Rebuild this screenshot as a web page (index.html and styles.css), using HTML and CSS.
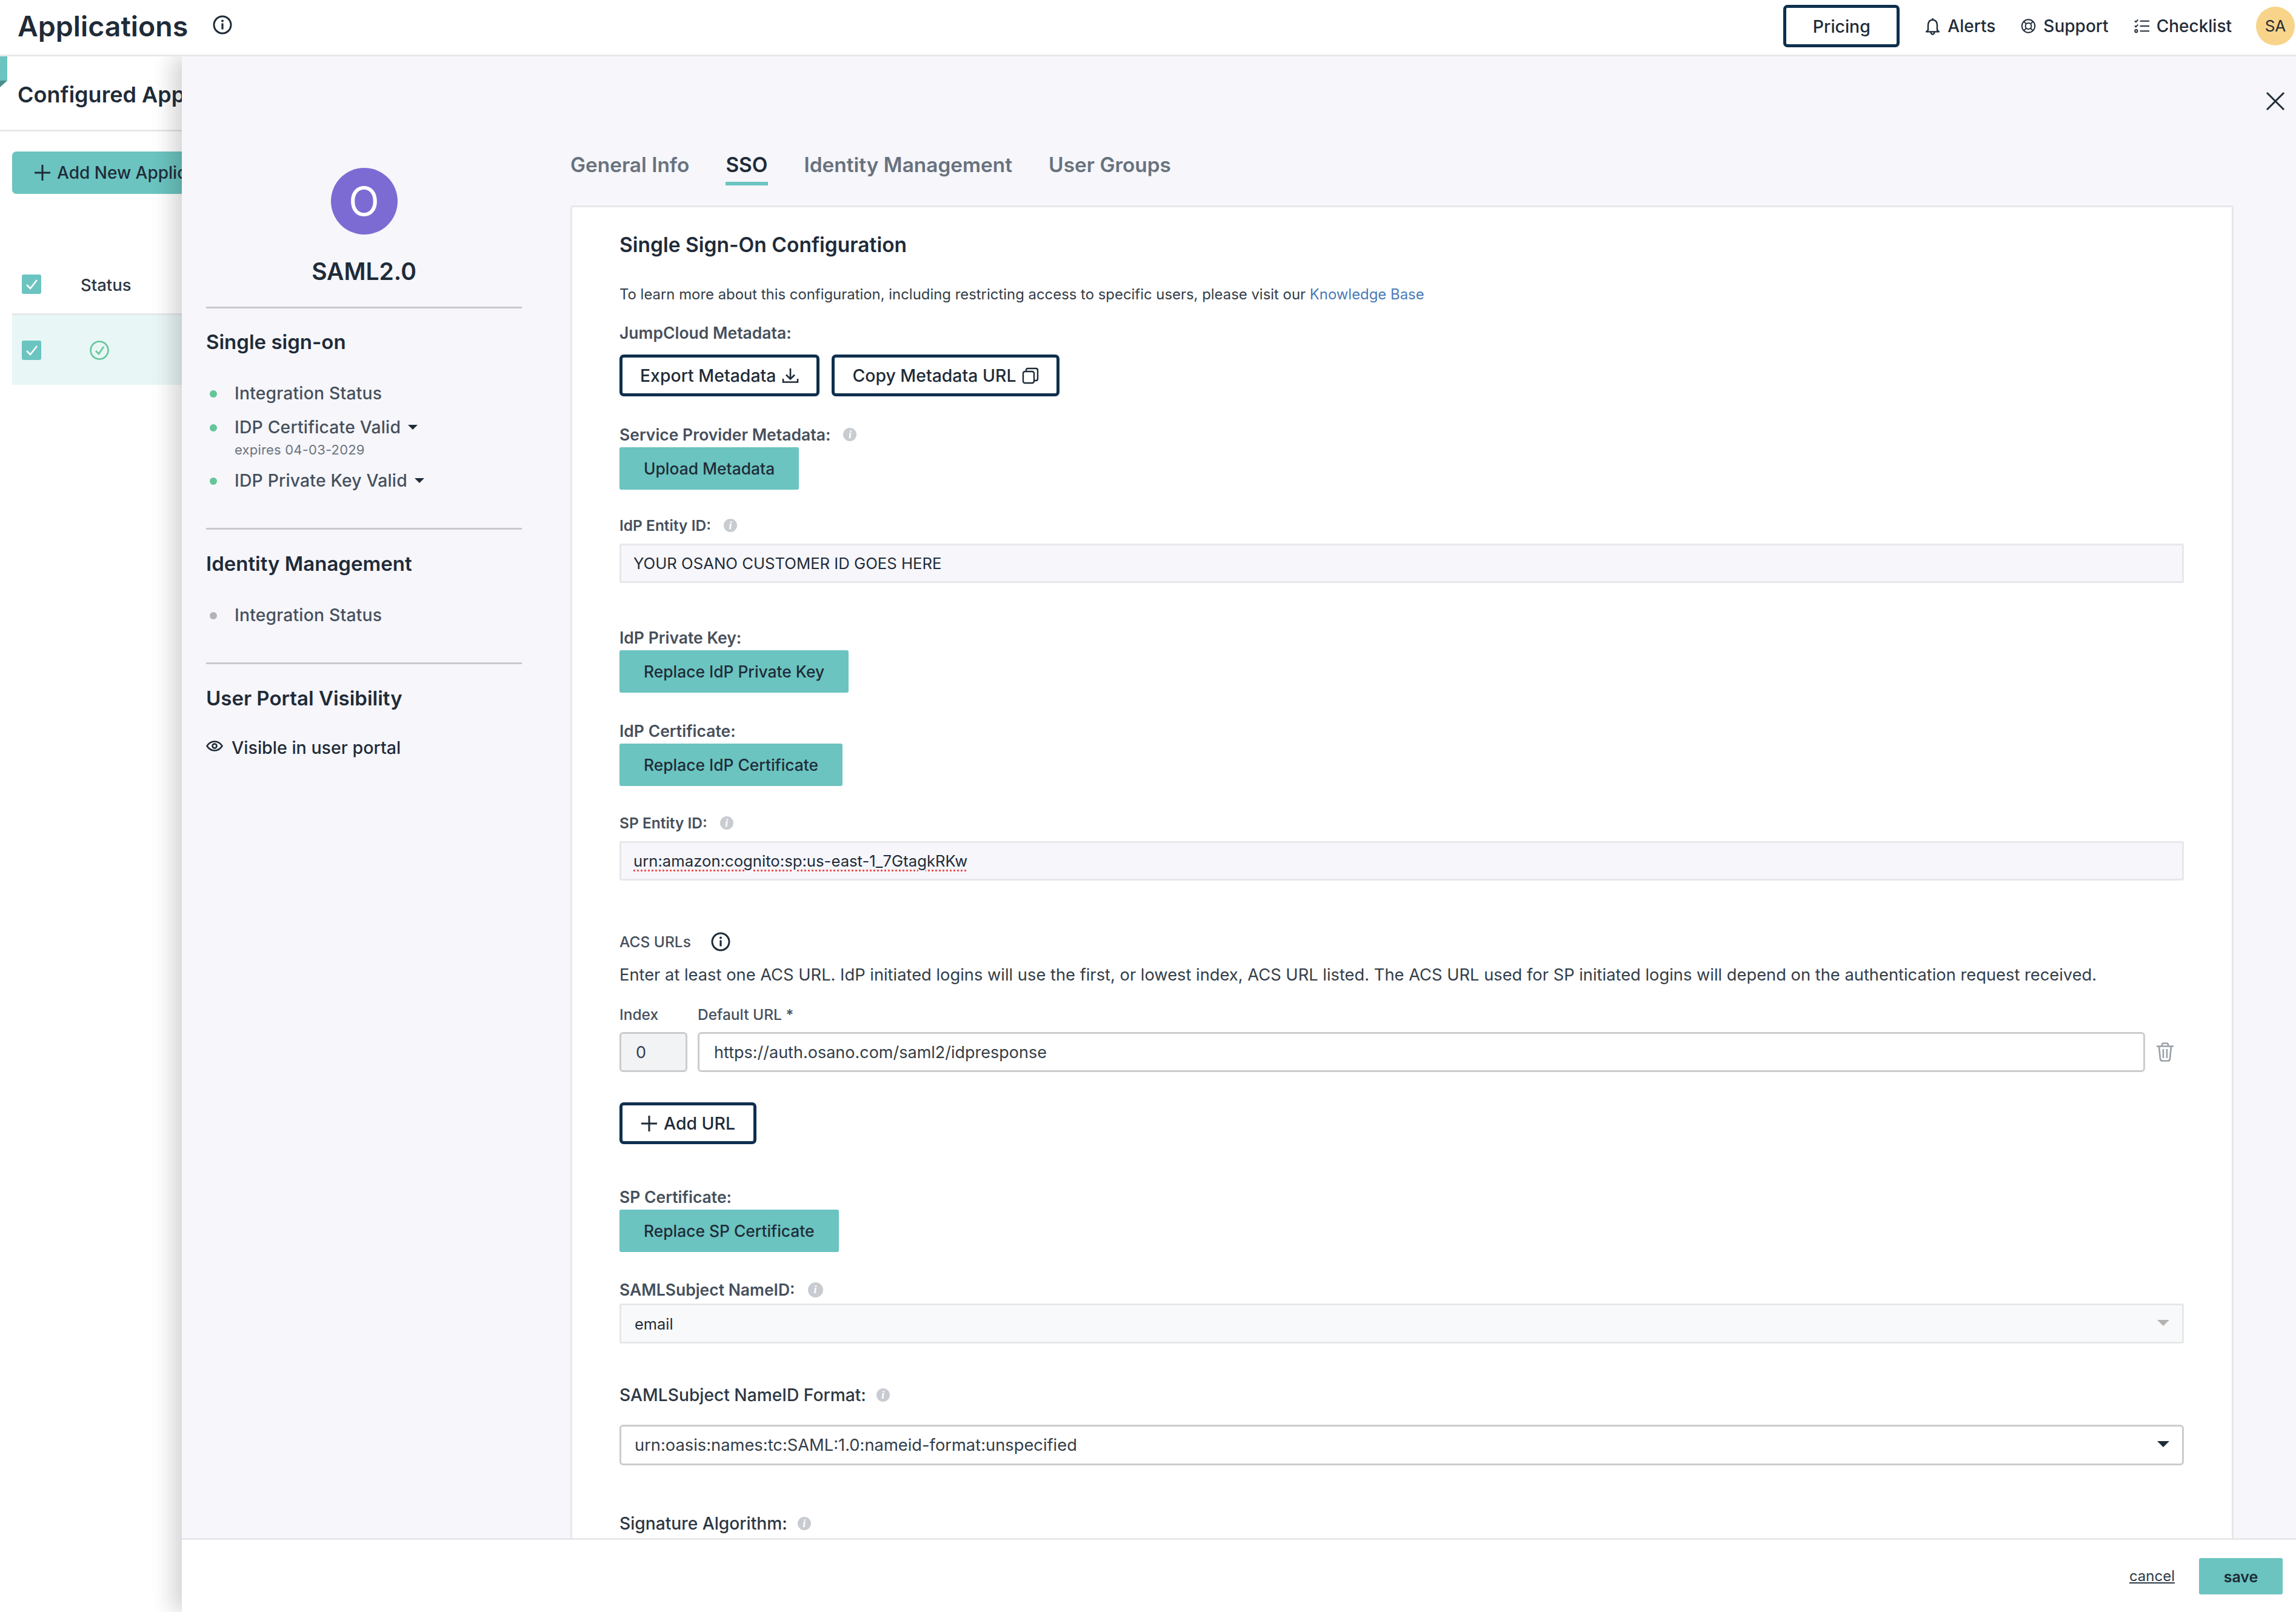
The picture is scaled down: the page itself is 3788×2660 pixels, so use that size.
FILE: index.html
```html
<!DOCTYPE html>
<html lang="en">
<head>
    <meta charset="UTF-8">
    <title>Applications</title>
    <link rel="stylesheet" href="styles.css">
</head>
<body>
    <header class="topbar">
        <h1 class="page-title">Applications</h1>
        <svg class="title-info" viewBox="0 0 32 32"><circle cx="16" cy="16" r="14" fill="none" stroke="#1f2b38" stroke-width="3"/><circle cx="16" cy="9.5" r="2" fill="#1f2b38"/><rect x="14.4" y="13.5" width="3.2" height="10" fill="#1f2b38"/></svg>
        <div class="topbar-right">
            <a class="btn-outline pricing">Pricing</a>
            <a class="top-link">
                <svg class="top-icon" viewBox="0 0 26 32"><path d="M13 2v3M5 23V14c0-5 3-9 8-9s8 4 8 9v9l3 3H2z M10 27c0 2 1.500 3.500 3 3.500s3-1.500 3-3.500" fill="none" stroke="#1f2b38" stroke-width="2.600" stroke-linejoin="round"/></svg>
                Alerts
            </a>
            <a class="top-link">
                <svg class="top-icon" viewBox="0 0 28 28"><g fill="none" stroke="#1f2b38" stroke-width="2.200"><circle cx="14" cy="14" r="12"/><circle cx="14" cy="14" r="5.500"/><path d="M5.500 5.500l4.600 4.600M22.500 5.500l-4.600 4.600M5.500 22.500l4.600-4.600M22.500 22.500l-4.600-4.600"/></g></svg>
                Support
            </a>
            <a class="top-link">
                <svg class="top-icon" viewBox="0 0 26 26"><g fill="none" stroke="#1f2b38" stroke-width="2"><path d="M10 4.500h16M10 13h16M10 21.500h16"/><path d="M1 4l2 2 3.500-4M1 12.500l2 2 3.500-4"/><circle cx="3.500" cy="21.500" r="2.200"/></g></svg>
                Checklist
            </a>
            <div class="avatar">SA</div>
        </div>
    </header>

    <div class="behind">
        <div class="ribbon"></div>
        <h2 class="behind-title">Configured Applications</h2>
        <div class="behind-action">
            <a class="btn-add">
                <svg class="plus-icon" viewBox="0 0 28 28"><path d="M14 1v26M1 14h26" stroke="#1f2b38" stroke-width="3" fill="none"/></svg>
                Add New Application
            </a>
        </div>
        <div class="table-head">
            <span class="check-box"><svg viewBox="0 0 32 32"><path d="M8 17l6 6 11-14" fill="none" stroke="#fff" stroke-width="2.500"/></svg></span>
            <span class="status-head">Status</span>
        </div>
        <div class="table-row">
            <span class="check-box"><svg viewBox="0 0 32 32"><path d="M8 17l6 6 11-14" fill="none" stroke="#fff" stroke-width="2.500"/></svg></span>
            <svg class="row-status" viewBox="0 0 32 32"><circle cx="16" cy="16" r="14.500" fill="none" stroke="#63c598" stroke-width="2.500"/><path d="M10 17l5 5 8-12" fill="none" stroke="#63c598" stroke-width="2.500"/></svg>
        </div>
    </div>

    <div class="drawer">
        <svg class="drawer-close" viewBox="0 0 32 32"><path d="M2 2l28 28M30 2L2 30" stroke="#1f2b38" stroke-width="3" fill="none"/></svg>
        <div class="drawer-body">
            <aside class="side">
                <div class="app-logo">O</div>
                <div class="app-name">SAML2.0</div>
                <hr class="side-rule first">
                <h3 class="side-heading first">Single sign-on</h3>
                <ul class="status-list">
                    <li class="status-item"><span class="dot"></span>Integration Status</li>
                    <li class="status-item"><span class="dot"></span>IDP Certificate Valid<span class="caret"></span></li>
                    <li class="status-note">expires 04-03-2029</li>
                    <li class="status-item next"><span class="dot"></span>IDP Private Key Valid<span class="caret"></span></li>
                </ul>
                <hr class="side-rule">
                <h3 class="side-heading">Identity Management</h3>
                <ul class="status-list">
                    <li class="status-item"><span class="dot off"></span>Integration Status</li>
                </ul>
                <hr class="side-rule">
                <h3 class="side-heading">User Portal Visibility</h3>
                <div class="visible-row">
                    <svg class="eye-icon" viewBox="0 0 28 18"><path d="M1.500 9C5 3.500 9 1.500 14 1.500S23 3.500 26.500 9C23 14.500 19 16.500 14 16.500S5 14.500 1.500 9z" fill="none" stroke="#1f2b38" stroke-width="2.600"/><circle cx="14" cy="9" r="3.500" fill="none" stroke="#1f2b38" stroke-width="2.600"/></svg>
                    Visible in user portal
                </div>
            </aside>

            <main class="main">
                <nav class="tabs">
                    <a class="tab">General Info</a>
                    <a class="tab active">SSO</a>
                    <a class="tab">Identity Management</a>
                    <a class="tab">User Groups</a>
                </nav>

                <section class="card">
                    <h2 class="card-title">Single Sign-On Configuration</h2>
                    <p class="intro">To learn more about this configuration, including restricting access to specific users, please visit our <a class="link">Knowledge Base</a></p>

                    <div class="label l-jump">JumpCloud Metadata:</div>
                    <div class="btn-row">
                        <a class="btn-outline">Export Metadata
                            <svg class="btn-icon" viewBox="0 0 28 28"><path d="M14 2v17M7 12.500l7 7 7-7M2 19v5.500h24V19" fill="none" stroke="#1f2b38" stroke-width="2.600"/></svg>
                        </a>
                        <a class="btn-outline">Copy Metadata URL
                            <svg class="btn-icon" viewBox="0 0 28 28"><rect x="2" y="7" width="18" height="19" rx="3" fill="none" stroke="#1f2b38" stroke-width="2.400"/><path d="M7 7V5c0-2 1-3 3-3h13c2 0 3 1 3 3v14c0 2-1 3-3 3h-3" fill="none" stroke="#1f2b38" stroke-width="2.400"/></svg>
                        </a>
                    </div>

                    <div class="label l-sp-meta">Service Provider Metadata:<span class="hint">i</span></div>
                    <a class="btn-teal b-upload">Upload Metadata</a>

                    <div class="label small strong l-idp-entity">IdP Entity ID:<span class="hint">i</span></div>
                    <div class="input readonly i-idp-entity">YOUR OSANO CUSTOMER ID GOES HERE</div>

                    <div class="label l-key">IdP Private Key:</div>
                    <a class="btn-teal b-key">Replace IdP Private Key</a>

                    <div class="label l-cert">IdP Certificate:</div>
                    <a class="btn-teal b-cert">Replace IdP Certificate</a>

                    <div class="label small strong l-sp-entity">SP Entity ID:<span class="hint">i</span></div>
                    <div class="input readonly i-sp-entity"><span class="spell">urn:amazon:cognito:sp:us-east-1_7GtagkRKw</span></div>

                    <div class="label small l-acs">ACS URLs
                        <svg class="acs-info" viewBox="0 0 32 32"><circle cx="16" cy="16" r="14" fill="none" stroke="#1f2b38" stroke-width="3"/><circle cx="16" cy="9.500" r="2" fill="#1f2b38"/><rect x="14.400" y="13.500" width="3.200" height="10" fill="#1f2b38"/></svg>
                    </div>
                    <p class="acs-help">Enter at least one ACS URL. IdP initiated logins will use the first, or lowest index, ACS URL listed. The ACS URL used for SP initiated logins will depend on the authentication request received.</p>

                    <div class="url-grid">
                        <div class="label small">Index</div>
                        <div class="label small">Default URL *</div>
                        <div class="trash-cell"></div>
                        <div class="input url index">0</div>
                        <div class="input url">https://auth.osano.com/saml2/idpresponse</div>
                        <svg class="trash-icon" viewBox="0 0 30 32"><g fill="none" stroke="#9aa1a8" stroke-width="2.600"><path d="M1 6.500h28M10 6V4c0-1.500 1-2.500 2.500-2.500h5C19 1.500 20 2.500 20 4v2M5 7l2 20c.2 2 1.500 3.500 3.500 3.500h9c2 0 3.300-1.500 3.500-3.500l2-20M12 11v15M18 11v15"/></g></svg>
                    </div>

                    <a class="btn-outline b-add">
                        <svg class="plus-icon" viewBox="0 0 28 28"><path d="M14 1v26M1 14h26" stroke="#1f2b38" stroke-width="3" fill="none"/></svg>
                        Add URL
                    </a>

                    <div class="label l-sp-cert">SP Certificate:</div>
                    <a class="btn-teal b-sp-cert">Replace SP Certificate</a>

                    <div class="label l-name-id">SAMLSubject NameID:<span class="hint big">i</span></div>
                    <div class="input select disabled i-name-id">email<span class="select-caret grey"></span></div>

                    <div class="label dark l-format">SAMLSubject NameID Format:<span class="hint">i</span></div>
                    <div class="input select i-format">urn:oasis:names:tc:SAML:1.0:nameid-format:unspecified<span class="select-caret"></span></div>

                    <div class="label dark l-sig">Signature Algorithm:<span class="hint">i</span></div>
                </section>
            </main>
        </div>
        <footer class="drawer-foot">
            <a class="cancel">cancel</a>
            <a class="save">save</a>
        </footer>
    </div>
</body>
</html>
```

FILE: styles.css
```css
:root {
    --ink: #1f2b38;
    --navy: #0f2f4d;
    --teal: #6bc4c0;
    --panel: #f6f6fb;
    --line: #e6e8ea;
    --rule: #c9c9cf;
    --label: #46505c;
}

* {
    box-sizing: border-box;
}

html, body {
    margin: 0;
    height: 2660px;
    overflow: hidden;
}

body {
    position: relative;
    background: #ffffff;
    color: var(--ink);
    font-family: Inter, 'Noto Sans', 'Liberation Sans', sans-serif;
}

h1, h2, h3, p, ul {
    margin: 0;
    padding: 0;
}

/* top bar */
.topbar {
    position: relative;
    z-index: 2;
    display: flex;
    align-items: center;
    height: 93px;
    padding: 0 2px 4px 29px;
    border-bottom: 3px solid var(--line);
    background: #ffffff;
}

.page-title {
    font-size: 46.5px;
    font-weight: 600;
    line-height: 60px;
}

.title-info {
    width: 32px;
    height: 32px;
    margin: 0 0 5px 41px;
}

.topbar-right {
    display: flex;
    align-items: center;
    margin-left: auto;
}

.top-link {
    display: flex;
    align-items: center;
    gap: 12px;
    margin-left: 42px;
    font-size: 28px;
    font-weight: 500;
}

.top-icon {
    width: 25px;
    height: 30px;
}

.avatar {
    width: 64px;
    height: 64px;
    margin-left: 40px;
    border-radius: 50%;
    background: #f8d48a;
    font-size: 26px;
    line-height: 64px;
    text-align: center;
}

/* buttons */
.btn-outline {
    display: inline-flex;
    align-items: center;
    justify-content: center;
    gap: 10px;
    height: 69px;
    padding: 0 29px;
    border: 5px solid var(--navy);
    border-radius: 7px;
    background: #ffffff;
    font-size: 28.4px;
    font-weight: 500;
    white-space: nowrap;
}

.pricing {
    width: 192px;
    height: 70px;
    padding: 0;
}

.btn-icon {
    width: 28px;
    height: 28px;
}

.btn-teal {
    display: flex;
    align-items: center;
    justify-content: center;
    width: max-content;
    height: 70px;
    padding: 0 40px;
    border-radius: 3px;
    background: var(--teal);
    font-size: 26.4px;
    font-weight: 500;
}

.plus-icon {
    flex: none;
    width: 28px;
    height: 28px;
}

/* page behind the drawer */
.behind {
    width: 300px;
    height: 2567px;
    overflow: hidden;
    white-space: nowrap;
    position: relative;
}

.ribbon {
    position: absolute;
    top: 0;
    left: 0;
    width: 12px;
    height: 40px;
    background: var(--teal);
}

.ribbon::after {
    content: '';
    position: absolute;
    top: 40px;
    left: 0;
    border-top: 11px solid #4c8f8c;
    border-right: 12px solid transparent;
}

.behind-title {
    height: 124px;
    padding: 41px 0 0 29px;
    border-bottom: 3px solid var(--line);
    font-size: 36px;
    font-weight: 600;
    line-height: 44px;
}

.behind-action {
    padding: 33px 0 0 20px;
}

.btn-add {
    display: flex;
    align-items: center;
    gap: 10px;
    width: 500px;
    height: 70px;
    padding-left: 36px;
    border-radius: 7px;
    background: var(--teal);
    font-size: 28px;
    font-weight: 500;
}

.table-head {
    display: flex;
    align-items: center;
    height: 200px;
    margin-left: 20px;
    padding: 100px 0 0 16px;
    border-bottom: 3px solid var(--line);
}

.check-box {
    display: block;
    width: 32px;
    height: 32px;
    border-radius: 3px;
    background: var(--teal);
}

.check-box svg {
    display: block;
}

.status-head {
    margin: 3px 0 0 65px;
    font-size: 27.5px;
    font-weight: 500;
    color: #2a3642;
}

.table-row {
    display: flex;
    align-items: center;
    height: 115px;
    margin-left: 20px;
    padding-left: 16px;
    background: #e8f6f5;
}

.row-status {
    width: 32px;
    height: 32px;
    margin-left: 80px;
}

/* drawer */
.drawer {
    position: absolute;
    top: 93px;
    left: 300px;
    right: 0;
    bottom: 0;
    display: flex;
    flex-direction: column;
    background: var(--panel);
    box-shadow: -16px 0 32px rgba(30, 30, 30, 0.18);
}

.drawer-close {
    position: absolute;
    top: 58px;
    right: 18px;
    width: 32px;
    height: 32px;
}

.drawer-body {
    display: flex;
    flex: 1;
    min-height: 0;
    overflow: hidden;
}

.drawer-foot {
    display: flex;
    align-items: center;
    justify-content: flex-end;
    gap: 40px;
    height: 122px;
    padding-right: 22px;
    border-top: 3px solid var(--line);
    background: #ffffff;
}

.cancel {
    font-size: 24px;
    color: #2f3a46;
    text-decoration: underline;
}

.save {
    width: 138px;
    height: 60px;
    border-radius: 3px;
    background: var(--teal);
    font-size: 25px;
    font-weight: 600;
    line-height: 63px;
    text-align: center;
}

/* drawer left column */
.side {
    flex: none;
    width: 641px;
    padding: 184px 80px 0 40px;
}

.app-logo {
    width: 110px;
    height: 110px;
    margin: 0 auto;
    border-radius: 50%;
    background: #7c6bd3;
    color: #ffffff;
    font-size: 66px;
    line-height: 110px;
    text-align: center;
}

.app-name {
    margin-top: 36px;
    font-size: 39px;
    font-weight: 600;
    line-height: 50px;
    text-align: center;
}

.side-rule {
    height: 3px;
    margin: 63px 0 0;
    border: 0;
    background: var(--rule);
}

.side-rule.first {
    margin-top: 33px;
}

.side-heading {
    margin-top: 36px;
    font-size: 33px;
    font-weight: 600;
    line-height: 40px;
}

.side-heading.first {
    margin-top: 35px;
}

.status-list {
    list-style: none;
    margin-top: 50px;
}

.status-item {
    display: flex;
    align-items: center;
    height: 30px;
    margin-bottom: 26px;
    font-size: 28.3px;
    font-weight: 500;
    letter-spacing: 0.2px;
    color: var(--label);
}

.status-item:last-child {
    margin-bottom: 0;
}

.status-item:nth-child(2) {
    margin-bottom: 10px;
}

.status-item.next {
    margin-top: 24px;
}

.dot {
    width: 12px;
    height: 12px;
    margin: 2px 29px 0 6px;
    border-radius: 50%;
    background: #63c598;
}

.dot.off {
    background: #b4b4b4;
}

.caret {
    margin-left: 12px;
    border-top: 8px solid var(--ink);
    border-left: 8px solid transparent;
    border-right: 8px solid transparent;
}

.status-note {
    height: 24px;
    padding-left: 47px;
    font-size: 22px;
    letter-spacing: 0.2px;
    line-height: 24px;
    color: #6c747c;
}

.visible-row {
    display: flex;
    align-items: center;
    gap: 14px;
    height: 30px;
    margin-top: 46px;
    font-size: 28.6px;
    font-weight: 500;
}

.eye-icon {
    width: 28px;
    height: 18px;
    margin-bottom: 4px;
}

/* drawer main column */
.main {
    flex: 1;
    min-width: 0;
    padding: 159px 103px 0 0;
}

.tabs {
    display: flex;
    gap: 60px;
}

.tab {
    height: 54px;
    padding-bottom: 8px;
    border-bottom: 6px solid transparent;
    font-size: 33.4px;
    font-weight: 600;
    line-height: 40px;
    color: #68727d;
}

.tab.active {
    border-bottom-color: var(--teal);
    color: var(--ink);
}

.card {
    margin-top: 33px;
    height: 2400px;
    padding: 40px 79px 0 78px;
    border: 3px solid var(--line);
    border-radius: 4px;
    background: #ffffff;
}

.card-title {
    font-size: 33.5px;
    font-weight: 600;
    line-height: 44px;
}

.intro {
    margin-top: 44px;
    font-size: 23.9px;
    line-height: 32px;
    color: #333d48;
}

.link {
    color: #4a7ab8;
}

.label {
    display: flex;
    align-items: center;
    height: 32px;
    font-size: 26.5px;
    font-weight: 600;
    color: var(--label);
}

.label.small {
    font-size: 24.5px;
    font-weight: 500;
}

.label.small.strong {
    font-weight: 600;
}

.label.dark {
    font-size: 28.2px;
    font-weight: 500;
    color: #2c3743;
}

.hint {
    width: 22px;
    height: 22px;
    margin-left: 21px;
    border-radius: 50%;
    background: #c8ccd0;
    color: #ffffff;
    font-family: 'Liberation Serif', serif;
    font-size: 18px;
    font-style: italic;
    font-weight: 700;
    line-height: 22px;
    text-align: center;
}

.hint.big {
    width: 25px;
    height: 25px;
    line-height: 25px;
}

.label.dark .hint {
    margin-left: 17px;
}

.btn-row {
    display: flex;
    gap: 20px;
    margin-top: 20px;
}

.input {
    display: flex;
    align-items: center;
    height: 65px;
    padding-left: 20px;
    border: 3px solid var(--line);
    border-radius: 3px;
    font-size: 25.7px;
}

.input.readonly {
    background: var(--panel);
}

.spell {
    text-decoration: underline dotted #f0524f 3px;
    text-underline-offset: 5px;
}

.input.select {
    position: relative;
    height: 66px;
    padding-left: 22px;
}

.input.disabled {
    background: #f8f9fa;
}

.i-name-id {
    font-size: 25.4px;
}

.input.select.i-format {
    height: 67px;
    border-color: #cccccf;
    border-radius: 6px;
    font-size: 27.3px;
    color: #333d48;
}

.select-caret {
    position: absolute;
    right: 21px;
    top: 24px;
    border-top: 10px solid var(--ink);
    border-left: 10px solid transparent;
    border-right: 10px solid transparent;
}

.select-caret.grey {
    border-top-color: #b5b2b2;
}

.url-grid {
    display: grid;
    grid-template-columns: 112px 2388px auto;
    column-gap: 17px;
    row-gap: 13px;
    align-items: center;
    margin-top: 33px;
}

.input.url {
    height: 66px;
    padding-left: 24px;
    border-color: #cccccf;
    border-radius: 6px;
    font-size: 27px;
    color: #333d48;
}

.input.index {
    padding-left: 24px;
    background: #f2f3f5;
}

.trash-icon {
    width: 30px;
    height: 32px;
    margin-left: 1px;
}

.acs-info {
    width: 32px;
    height: 32px;
    margin-left: 33px;
}

.acs-help {
    margin-top: 23px;
    font-size: 27.3px;
    line-height: 32px;
    color: #333d48;
    white-space: nowrap;
}

.b-add {
    display: flex;
    width: 226px;
    padding: 0;
    margin-top: 50px;
}

/* vertical rhythm of the form */
.l-jump { margin-top: 31px; }
.l-sp-meta { margin-top: 47px; }
.b-upload, .b-key, .b-cert, .b-sp-cert { margin-top: 5px; }
.l-idp-entity { margin-top: 43px; }
.i-idp-entity { margin-top: 14px; }
.l-key { margin-top: 74px; }
.l-cert { margin-top: 47px; }
.l-sp-entity { margin-top: 45px; }
.i-sp-entity { margin-top: 14px; }
.l-acs { margin-top: 85px; }
.l-sp-cert { margin-top: 71px; }
.l-name-id { margin-top: 46px; }
.i-name-id { margin-top: 7px; }
.l-format { margin-top: 69px; }
.i-format { margin-top: 33px; }
.l-sig { margin-top: 80px; }
```
